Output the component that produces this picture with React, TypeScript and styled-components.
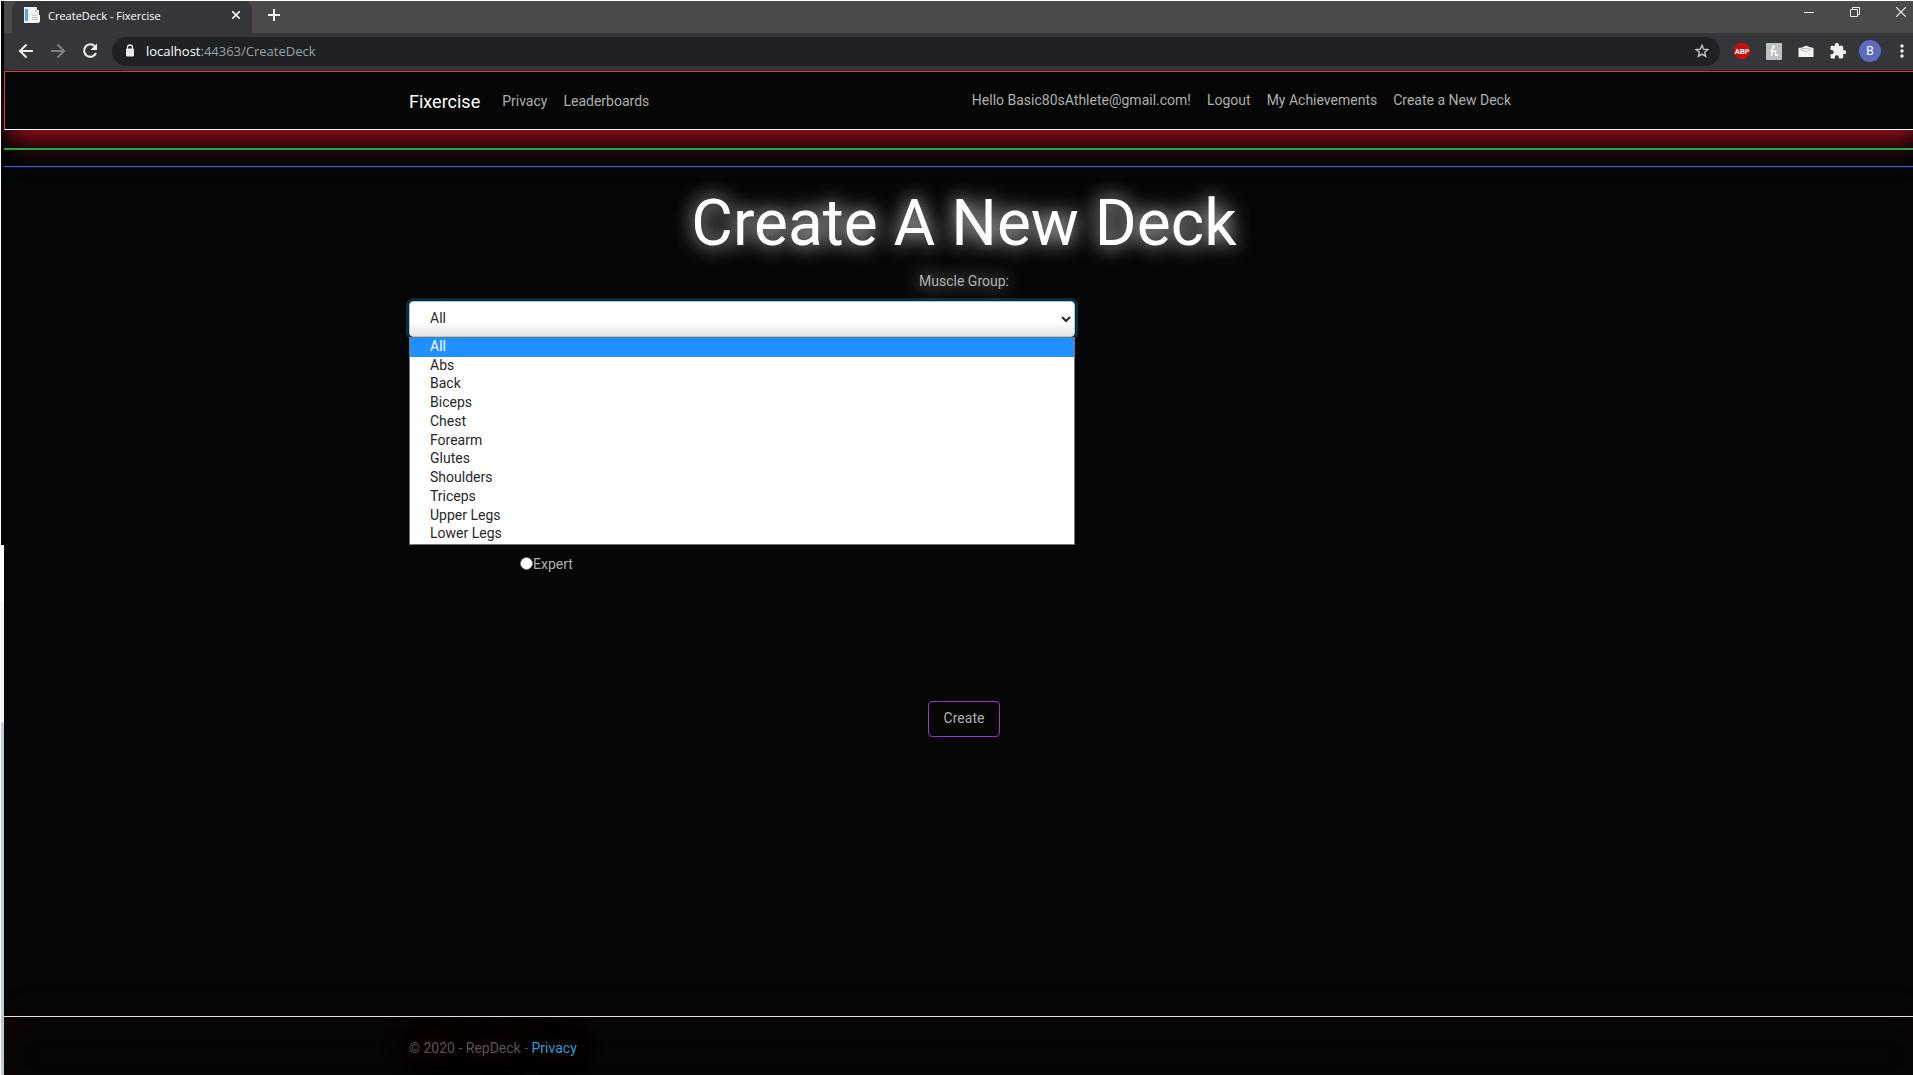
import React, { useState } from "react";
import styled, { createGlobalStyle } from "styled-components";

const GlobalStyle = createGlobalStyle`
  *, *::before, *::after { box-sizing: border-box; }
  html, body { margin: 0; background: #060606; }
  body { overflow: hidden; }
  button, select, input { font: inherit; margin: 0; }
`;

const systemFont = `"Open Sans", "Noto Sans", sans-serif`;
const siteFont = `Roboto, "Liberation Sans", sans-serif`;

const Screen = styled.div`
  display: flex;
  min-height: 100vh;
  border-top: 1px solid #fff;
  border-left: 1px solid #fff;
  overflow: hidden;
`;

const DesktopEdge = styled.div`
  flex: 0 0 3px;
  background: linear-gradient(#000507 544px, #fff 544px, #fff 602px, #dcdcdc 602px, #dcdcdc 603px, #f1f4f9 603px, #f1f4f9 721px, #c0cce0 722px);
`;

/* The browser window runs a little past the right edge of the screen. */
const BrowserWindow = styled.div`
  flex: 1;
  min-width: 0;
  display: flex;
  flex-direction: column;
  margin-right: -11px;
`;

const TabStrip = styled.div`
  display: flex;
  height: 32px;
  padding-left: 8px;
  background: #4c4a48;
  font-family: ${systemFont};
`;

const Tab = styled.div`
  display: flex;
  align-items: center;
  width: 240px;
  height: 32px;
  padding: 0 10px 4px 12px;
  border-radius: 8px 8px 0 0;
  background: #35363a;
  color: #fff;
  font-size: 11px;
`;

const TabTitle = styled.span`
  flex: 1;
  padding-left: 8px;
`;

const IconButton = styled.button<{ $w?: number }>`
  display: inline-flex;
  align-items: center;
  justify-content: center;
  width: ${(p) => p.$w ?? 32}px;
  padding: 0;
  border: 0;
  background: none;
  color: #f1f1f1;
  svg { display: block; }
`;

const NewTab = styled(IconButton)`
  height: 28px;
  margin-left: 6px;
`;

const WindowControls = styled.div`
  display: flex;
  height: 22px;
  margin-left: auto;
`;

const Toolbar = styled.div`
  display: flex;
  align-items: center;
  height: 38px;
  padding: 0 6px 1px;
  background: #35363a;
  border-bottom: 1px solid #28292c;
  font-family: ${systemFont};
`;

const AddressBar = styled.label`
  display: flex;
  align-items: center;
  flex: 1;
  height: 29px;
  margin: 0 6px;
  padding: 0 8px 0 12px;
  border-radius: 15px;
  background: #202124;
  font-size: 13px;
`;

const Address = styled.span`
  flex: 1;
  padding-left: 10px;
  color: #9aa0a6;
  b { font-weight: 400; color: #fff; }
`;

const Avatar = styled.span`
  display: flex;
  align-items: center;
  justify-content: center;
  width: 22px;
  height: 22px;
  border-radius: 50%;
  background: #5c6bc0;
  color: #fff;
  font-family: ${siteFont};
  font-size: 12px;
`;

const Page = styled.div`
  flex: 1;
  display: flex;
  flex-direction: column;
  background: #060606;
  color: #adafae;
  font-family: ${siteFont};
  font-size: 14px;
  line-height: 21px;
`;

const Container = styled.div`
  width: 100%;
  max-width: 1140px;
  margin: 0 auto;
  padding: 0 15px;
`;

const Navbar = styled.nav`
  display: flex;
  height: 59px;
  border: 1px solid #dc3545;
  border-bottom-color: #fff;
  background: #060606;
  box-shadow: 0 15px 24px -7px #b0101c;
`;

const NavRow = styled(Container)`
  display: flex;
  align-items: center;
  padding-top: 2px;
`;

const Brand = styled.a`
  margin-right: 14px;
  color: #fff;
  font-size: 18px;
  text-decoration: none;
`;

const NavLinks = styled.div<{ $end?: boolean }>`
  display: flex;
  margin-left: ${(p) => (p.$end ? "auto" : 0)};
  padding-bottom: ${(p) => (p.$end ? 2 : 0)}px;
`;

const NavLink = styled.a`
  padding: 8px;
  color: #adafae;
  text-decoration: none;
`;

const LogoutButton = styled.button`
  padding: 8px;
  border: 0;
  background: none;
  color: #adafae;
`;

const GreenStripe = styled.div`
  height: 20px;
  border-bottom: 2px solid #28a745;
  box-shadow: 0 20px 24px -8px rgba(170, 60, 50, 0.16);
`;

const BlueStripe = styled.div`
  height: 17px;
  border-bottom: 1px solid #007bff;
  box-shadow: 0 28px 24px -8px rgba(60, 95, 135, 0.1);
`;

const Main = styled.main`
  flex: 1;
`;

const DeckForm = styled.form`
  display: flex;
  flex-direction: column;
  align-items: center;
`;

const Title = styled.h1`
  margin: 18px 0 9px;
  color: #fff;
  font-size: 64px;
  font-weight: 400;
  line-height: 77px;
  text-shadow: 0 0 20px #fff;
`;

const FieldLabel = styled.label`
  margin-bottom: 9px;
  text-shadow: 0 0 20px #fff;
`;

const SelectField = styled.div`
  position: relative;
  align-self: flex-start;
  width: 60%;
`;

const MuscleSelect = styled.select`
  display: block;
  width: 100%;
  height: 36px;
  padding: 0 0 2px 16px;
  border: 1px solid #95cfeb;
  border-radius: 4px;
  background: linear-gradient(#fff 60%, #e4e4e4);
  color: #282828;
  outline: 0;
  box-shadow: 0 0 0 3px rgba(42, 159, 214, 0.25);
`;

const OptionList = styled.ul`
  position: absolute;
  top: 100%;
  left: 0;
  right: 0;
  display: grid;
  grid-auto-rows: 1fr;
  height: 208px;
  margin: 0;
  padding: 0;
  border: 1px solid #767676;
  background: #fff;
  list-style: none;
`;

const Option = styled.li<{ $active: boolean }>`
  padding-left: 20px;
  background: ${(p) => (p.$active ? "#1e90ff" : "#fff")};
  color: ${(p) => (p.$active ? "#fff" : "#282828")};
  line-height: 17px;
`;

const LevelChoice = styled.label`
  display: flex;
  align-items: center;
  align-self: flex-start;
  margin: 217px 0 126px 111px;
`;

const Radio = styled.input`
  appearance: none;
  width: 13px;
  height: 13px;
  margin-bottom: 3px;
  border: 1px solid #767676;
  border-radius: 50%;
  background: #fff;
`;

const CreateButton = styled.button`
  height: 36px;
  padding: 0 15px 1px;
  border: 1px solid #9933cc;
  border-radius: 4px;
  background: transparent;
  color: #adafae;
`;

const Footer = styled.footer`
  height: 59px;
  border-top: 1px solid #dee2e6;
  color: #555;
  line-height: 62px;
  box-shadow: 0 0 40px rgba(220, 20, 40, 0.07), inset 0 10px 40px -10px rgba(220, 20, 40, 0.07);
`;

const FooterText = styled.span`
  text-shadow: 0 0 20px rgba(176, 16, 31, 0.5), 0 0 30px rgba(176, 16, 31, 0.5);
`;

const FooterLink = styled.a`
  color: #2a9fd6;
  text-decoration: none;
`;

const muscles = ["All", "Abs", "Back", "Biceps", "Chest", "Forearm", "Glutes", "Shoulders", "Triceps", "Upper Legs", "Lower Legs"];

const Favicon = () => (
  <svg width="16" height="16" viewBox="0 0 16 16" aria-hidden="true">
    <path d="M0 0h13v3h2v13H0z" fill="#e8eef2" />
    <path d="M1 2h3v12H1z" fill="#58a8dc" />
    <path d="M5 1h6l2 2v5h3v7H7v-1H5z" fill="#f5f5f2" />
    <path d="M8 8h5v1H8zM8 10h6v1H8zM8 12h6v1H8zM11 2v3h3" fill="#c4cacc" />
  </svg>
);

const BrowserChrome = () => (
  <header>
    <TabStrip>
      <Tab>
        <Favicon />
        <TabTitle>CreateDeck - Fixercise</TabTitle>
        <IconButton $w={12} aria-label="Close tab">
          <svg width="8" height="8" viewBox="0 0 8 8" stroke="currentColor" strokeWidth="1.6"><path d="M0 0l8 8M8 0L0 8" /></svg>
        </IconButton>
      </Tab>
      <NewTab aria-label="New tab">
        <svg width="12" height="12" viewBox="0 0 12 12" stroke="currentColor" strokeWidth="2"><path d="M6 0v12M0 6h12" /></svg>
      </NewTab>
      <WindowControls>
        <IconButton $w={46} aria-label="Minimize">
          <svg width="10" height="10" viewBox="0 0 10 10" stroke="currentColor"><path d="M0 5.5h10" /></svg>
        </IconButton>
        <IconButton $w={46} aria-label="Restore">
          <svg width="10" height="10" viewBox="0 0 10 10" fill="none" stroke="currentColor"><path d="M.5 2.5h7v7h-7zM2.5 2.5v-2h7v7h-2" /></svg>
        </IconButton>
        <IconButton $w={46} aria-label="Close">
          <svg width="10" height="10" viewBox="0 0 10 10" stroke="currentColor" strokeWidth="1.2"><path d="M0 0l10 10M10 0L0 10" /></svg>
        </IconButton>
      </WindowControls>
    </TabStrip>
    <Toolbar>
      <IconButton aria-label="Back">
        <svg width="16" height="16" viewBox="0 0 16 16" fill="none" stroke="currentColor" strokeWidth="2"><path d="M15 8H2M8.500 1.500L2 8l6.500 6.500" /></svg>
      </IconButton>
      <IconButton aria-label="Forward">
        <svg width="16" height="16" viewBox="0 0 16 16" fill="none" stroke="#808185" strokeWidth="2"><path d="M1 8h13M7.500 1.500L14 8l-6.500 6.500" /></svg>
      </IconButton>
      <IconButton aria-label="Reload">
        <svg width="16" height="16" viewBox="0 0 16 16"><path d="M13 3.500A6.200 6.200 0 1 0 14 10" fill="none" stroke="currentColor" strokeWidth="2" /><path d="M15 .5v6.500H8.500z" fill="currentColor" /></svg>
      </IconButton>
      <AddressBar>
        <svg width="12" height="14" viewBox="0 0 12 14" aria-hidden="true"><path d="M2.500 5h7v7h-7z" fill="#e8eaed" stroke="#e8eaed" strokeLinejoin="round" /><path d="M3.500 5V3.500a2.500 2.500 0 0 1 5 0V5" fill="none" stroke="#e8eaed" strokeWidth="1.300" /></svg>
        <Address><b>localhost</b>:44363/CreateDeck</Address>
        <IconButton $w={20} aria-label="Bookmark this page">
          <svg width="14" height="14" viewBox="0 0 14 14" fill="none" stroke="#c8cacd" strokeWidth="1.300"><path d="M7 1.200l1.600 4 4.300.3-3.300 2.700 1.100 4.200L7 10.100l-3.700 2.300 1.100-4.200L1.100 5.500l4.300-.3z" /></svg>
        </IconButton>
      </AddressBar>
      <IconButton aria-label="Ad blocker">
        <svg width="16" height="16" viewBox="0 0 16 16"><path d="M4.700 0h6.600L16 4.700v6.600L11.300 16H4.700L0 11.300V4.700z" fill="#c70d0d" /><text x="8" y="10.500" textAnchor="middle" fontFamily="Roboto" fontWeight="700" fontSize="7.5" fill="#fff">ABP</text></svg>
      </IconButton>
      <IconButton aria-label="Coupons">
        <svg width="16" height="17" viewBox="0 0 16 17"><rect width="16" height="17" rx="1" fill="#c0c0c0" /><path d="M4 8C7.500 6 9 3 7.800 2.800 6.500 2.600 6.300 8 5.600 13M6 10c1.500-2.500 4-3 3.700-.8-.2 1.500-.7 3.300.3 3.300.8 0 1.500-.8 2-1.500" fill="none" stroke="#fff" strokeWidth="1.300" /></svg>
      </IconButton>
      <IconButton aria-label="Mail">
        <svg width="16" height="14" viewBox="0 0 16 14"><path d="M.5 4L4 3.500 8 1.500l3.500 1.500 4 1V13H.5z" fill="#f4f4f4" /><path d="M2 5.500l6 2 6-2.500M3 4.500h9" fill="none" stroke="#c4c4c4" /></svg>
      </IconButton>
      <IconButton aria-label="Extensions">
        <svg width="18" height="18" viewBox="0 0 24 24"><path fill="currentColor" d="M20.500 11H19V7c0-1.100-.9-2-2-2h-4V3.500a2.500 2.500 0 0 0-5 0V5H4c-1.100 0-2 .9-2 2v3.800h1.500a2.700 2.700 0 0 1 0 5.400H2V20c0 1.100.9 2 2 2h3.800v-1.500a2.700 2.700 0 0 1 5.400 0V22H17c1.100 0 2-.9 2-2v-4h1.500a2.500 2.500 0 0 0 0-5z" /></svg>
      </IconButton>
      <IconButton aria-label="Profile"><Avatar>B</Avatar></IconButton>
      <IconButton aria-label="Menu">
        <svg width="4" height="16" viewBox="0 0 4 16" fill="currentColor"><circle cx="2" cy="3" r="1.700" /><circle cx="2" cy="8" r="1.700" /><circle cx="2" cy="13" r="1.700" /></svg>
      </IconButton>
    </Toolbar>
  </header>
);

export default function App() {
  const [muscle, setMuscle] = useState("All");
  return (
    <Screen>
      <GlobalStyle />
      <DesktopEdge />
      <BrowserWindow>
        <BrowserChrome />
        <Page>
          <Navbar>
            <NavRow>
              <Brand href="#home">Fixercise</Brand>
              <NavLinks>
                <NavLink href="#privacy">Privacy</NavLink>
                <NavLink href="#leaderboards">Leaderboards</NavLink>
              </NavLinks>
              <NavLinks $end>
                <NavLink href="#account">Hello Basic80sAthlete@gmail.com!</NavLink>
                <LogoutButton type="button">Logout</LogoutButton>
                <NavLink href="#achievements">My Achievements</NavLink>
                <NavLink href="#create">Create a New Deck</NavLink>
              </NavLinks>
            </NavRow>
          </Navbar>
          <GreenStripe />
          <BlueStripe />
          <Main>
            <Container>
              <DeckForm onSubmit={(e) => e.preventDefault()}>
                <Title>Create A New Deck</Title>
                <FieldLabel htmlFor="muscle">Muscle Group:</FieldLabel>
                <SelectField>
                  <MuscleSelect id="muscle" value={muscle} onChange={(e) => setMuscle(e.target.value)}>
                    {muscles.map((m) => <option key={m}>{m}</option>)}
                  </MuscleSelect>
                  <OptionList role="listbox" aria-label="Muscle Group">
                    {muscles.map((m) => (
                      <Option key={m} role="option" aria-selected={m === muscle} $active={m === muscle} onClick={() => setMuscle(m)}>{m}</Option>
                    ))}
                  </OptionList>
                </SelectField>
                <LevelChoice>
                  <Radio type="radio" name="level" value="expert" />
                  Expert
                </LevelChoice>
                <CreateButton type="submit">Create</CreateButton>
              </DeckForm>
            </Container>
          </Main>
          <Footer>
            <Container>
              <FooterText>© 2020 - RepDeck - <FooterLink href="#privacy">Privacy</FooterLink></FooterText>
            </Container>
          </Footer>
        </Page>
      </BrowserWindow>
    </Screen>
  );
}
